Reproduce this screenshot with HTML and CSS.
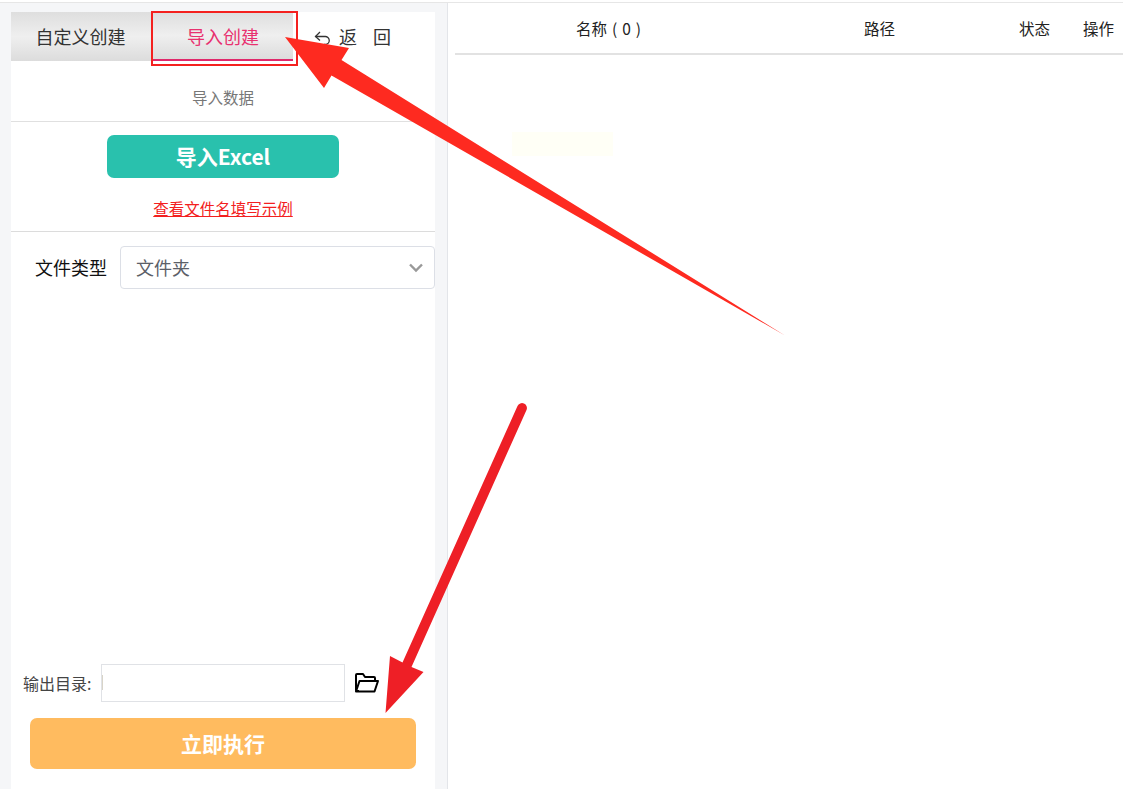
FILE: index.html
```html
<!DOCTYPE html>
<html lang="zh-CN">
<head>
<meta charset="utf-8">
<title>导入创建</title>
<link rel="stylesheet" href="styles.css">
</head>
<body>
<div class="app">
  <aside class="side">
    <div class="panel">
      <div class="tabs">
        <div class="tab">自定义创建</div>
        <div class="tab tab-active">导入创建</div>
        <div class="back">
          <svg class="back-icon" width="18" height="18" viewBox="0 0 18 18" fill="none" stroke="#333" stroke-width="1.3">
            <path d="M6 2 L1.5 6.5 L6 10.5"/>
            <path d="M1.5 6.5 H11 A4 4 0 0 1 11.5 14.5 H10"/>
          </svg>
          <span class="back-text">返 回</span>
        </div>
      </div>
      <div class="sec-title">导入数据</div>
      <div class="import-area">
        <button class="btn-import">导入Excel</button>
        <a class="example-link">查看文件名填写示例</a>
      </div>
      <div class="form-row">
        <label class="form-label">文件类型</label>
        <div class="select">
          <span class="select-value">文件夹</span>
          <svg width="16" height="10" viewBox="0 0 16 10" fill="none" stroke="#999" stroke-width="2.4"><path d="M2 1.5 L8 7.5 L14 1.5"/></svg>
        </div>
      </div>
      <div class="bottom">
        <div class="output-row">
          <span class="output-label">输出目录:</span>
          <div class="output-input"></div>
          <svg class="folder" width="26" height="22" viewBox="0 0 26 22" fill="none" stroke="#000" stroke-width="2" stroke-linejoin="round">
            <path d="M5 19 H3 Q2 19 2 18 V3 Q2 2 3 2 H9 L11 5 H20 Q21 5 21 6 V9"/>
            <path d="M5.5 9 H24 L20.5 19.5 H2 Z"/>
          </svg>
        </div>
        <button class="btn-run">立即执行</button>
      </div>
    </div>
  </aside>
  <main class="main">
    <div class="thead">
      <span class="col-name">名称 ( 0 )</span>
      <span>路径</span>
      <span>状态</span>
      <span>操作</span>
    </div>
    <div class="ghost"></div>
  </main>
</div>
<div class="mark-box"></div>
<svg class="arrows" width="1123" height="789" viewBox="0 0 1123 789">
  <path fill="#fe2a20" d="M285 37 L349 48 L341.5 60 L785 335.5 L331.5 75.5 L324 88 Z"/>
  <path fill="#ee1f26" d="M385.5 713 L390 656 L402.5 662.5 L517.5 406 A4.8 4.8 0 0 1 526.5 410 L411.5 667 L423.5 672 Z"/>
</svg>
</body>
</html>
```
FILE: styles.css
```css
* { box-sizing: border-box; }
html, body { margin: 0; padding: 0; height: 100%; overflow: hidden; background: #fff; }
body { font-family: "Noto Sans CJK SC", "Noto Sans", sans-serif; color: #222; padding-top: 2px; }
.app { display: flex; height: 787px; border-top: 1px solid #e6e6e6; }
.side { width: 448px; padding: 9px 12px 0 11px; background: #f5f6f8; border-right: 1px solid #e3e5e9; flex: none; }
.panel { background: #fff; height: 100%; display: flex; flex-direction: column; }
.tabs { display: flex; height: 49px; }
.tab { width: 141px; display: flex; align-items: center; justify-content: center; font-size: 18px; color: #333; background: linear-gradient(#dedede, #efefef 50%, #dcdcdc); padding-bottom: 2px; }
.tab:first-child { width: 142px; padding-right: 3px; }
.tab-active { width: 140px; color: #e8316f; border-bottom: 2px solid #e0286a; padding-bottom: 0; }
.back { flex: 1; display: flex; align-items: center; padding-left: 21px; font-size: 18px; color: #333; padding-bottom: 1px; }
.back-icon { margin-top: 6px; }
.back-text { margin-left: 7px; word-spacing: 12px; }
.sec-title { height: 61px; padding-top: 25px; border-bottom: 1px solid #e0e0e0; text-align: center; font-size: 15.5px; line-height: 22px; color: #777; }
.import-area { height: 110px; border-bottom: 1px solid #dcdcdc; display: flex; flex-direction: column; align-items: center; padding-top: 13px; }
.btn-import { width: 232px; height: 43px; border: 0; border-radius: 7px; background: #29c1ad; color: #fff; font: 700 21px "Noto Sans CJK SC", sans-serif; padding: 0 0 2px; }
.example-link { margin-top: 18px; font-size: 15.5px; line-height: 24px; color: #f32020; text-decoration: underline; }
.form-row { display: flex; align-items: center; margin-top: 14px; padding-left: 24px; }
.form-label { width: 85px; font-size: 18px; color: #111; padding-bottom: 2px; }
.select { flex: 1; height: 43px; border: 1px solid #dcdfe6; border-radius: 4px; display: flex; align-items: center; justify-content: space-between; padding: 0 10px 0 15px; font-size: 18px; color: #5c6068; }
.select-value { padding-bottom: 2px; }
.bottom { margin-top: auto; padding-bottom: 20px; }
.output-row { display: flex; align-items: center; padding-left: 12px; height: 38px; }
.output-label { width: 78px; font-size: 16px; color: #444; }
.output-input { position: relative; width: 244px; height: 38px; border: 1px solid #e0e2e6; background: #fff; }
.output-input::before { content: ""; position: absolute; left: 0; top: 10px; width: 1px; height: 15px; background: #d8d4c8; }
.folder { margin-left: 9px; }
.btn-run { display: block; width: 386px; height: 51px; margin: 16px 0 0 19px; border: 0; border-radius: 7px; background: #ffbb5f; color: #fff; font: 700 21px "Noto Sans CJK SC", sans-serif; padding: 0 0 2px; }
.main { flex: 1; min-width: 0; padding-left: 7px; background: #fff; }
.thead { display: grid; grid-template-columns: 288px 155px 64px auto; height: 52px; padding-left: 121px; border-bottom: 2px solid #e2e2e2; align-items: center; font-size: 15.5px; color: #222; }
.col-name { word-spacing: 1.5px; }
.ghost { width: 101px; height: 24px; margin: 77px 0 0 57px; background: #fffff6; }
.mark-box { position: absolute; left: 151px; top: 11px; width: 147px; height: 55px; border: 2px solid #f4211f; }
.arrows { position: absolute; left: 0; top: 0; pointer-events: none; }
```
